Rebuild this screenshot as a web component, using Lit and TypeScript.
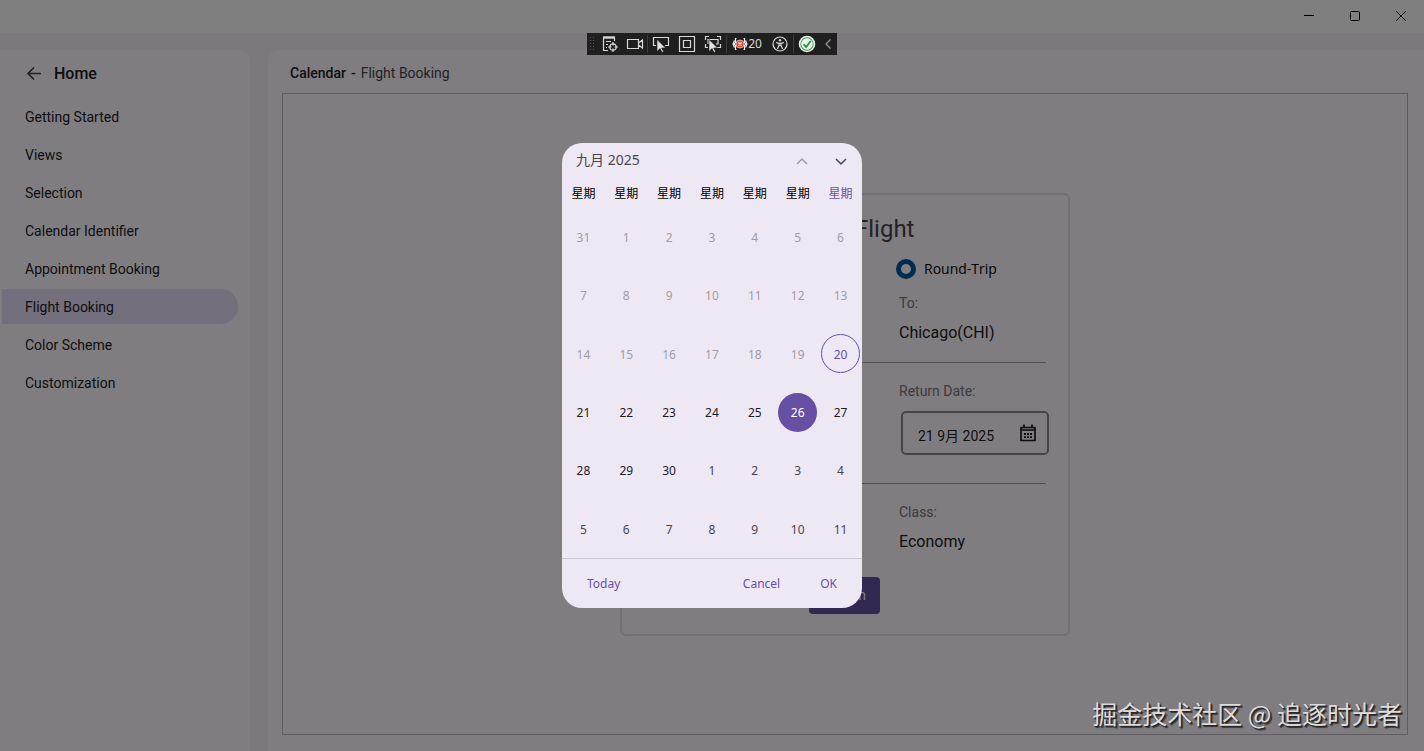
import { LitElement, html, css, svg } from "lit";
import { customElement, property, state } from "lit/decorators.js";
import { classMap } from "lit/directives/class-map.js";

const NAV_ITEMS = [
  "Getting Started",
  "Views",
  "Selection",
  "Calendar Identifier",
  "Appointment Booking",
  "Flight Booking",
  "Color Scheme",
  "Customization",
];

interface Day {
  label: number;
  kind: "past" | "current" | "next" | "today";
}

/* Six weeks of seven days, starting on 31 August 2025. */
function buildWeeks(): Day[][] {
  const days: Day[] = [];
  for (let i = 0; i < 42; i++) {
    if (i === 0) days.push({ label: 31, kind: "past" });
    else if (i < 20) days.push({ label: i, kind: "past" });
    else if (i === 20) days.push({ label: i, kind: "today" });
    else if (i <= 30) days.push({ label: i, kind: "current" });
    else days.push({ label: i - 30, kind: "next" });
  }
  return Array.from({ length: 6 }, (_, w) => days.slice(w * 7, w * 7 + 7));
}

@customElement("window-bar")
export class WindowBar extends LitElement {
  static styles = css`
    :host {
      display: flex;
      justify-content: flex-end;
      height: 33px;
      background: #ffffff;
    }
    .control {
      width: 46px;
      height: 32px;
      padding: 0;
      border: 0;
      background: none;
      display: grid;
      place-items: center;
      color: #000;
    }
    svg {
      display: block;
      fill: none;
      stroke: currentColor;
    }
  `;

  render() {
    return html`
      <button class="control" aria-label="Minimize">
        <svg width="12" height="12" viewBox="0 0 12 12"><path d="M1 5.5h10" /></svg>
      </button>
      <button class="control" aria-label="Maximize">
        <svg width="12" height="12" viewBox="0 0 12 12"><rect x="1.5" y="1.5" width="9" height="9" rx="1" /></svg>
      </button>
      <button class="control" aria-label="Close">
        <svg width="12" height="12" viewBox="0 0 12 12"><path d="M1 1l10 10M11 1L1 11" /></svg>
      </button>
    `;
  }
}

@customElement("side-nav")
export class SideNav extends LitElement {
  @property() active = "Flight Booking";

  static styles = css`
    :host {
      display: block;
      background: #fffbff;
      border-radius: 0 12px 0 0;
      font: 14px/20px Roboto, sans-serif;
      color: #1c1b1f;
    }
    .head {
      display: flex;
      align-items: center;
      gap: 12px;
      box-sizing: border-box;
      height: 48px;
      padding: 0 26px;
    }
    .back {
      padding: 0;
      border: 0;
      background: none;
      color: #49454f;
      display: block;
    }
    .back svg {
      display: block;
      fill: none;
      stroke: currentColor;
      stroke-width: 1.7;
    }
    .title {
      margin: 0;
      font-size: 16px;
      font-weight: 500;
    }
    .list {
      list-style: none;
      margin: 1px 12px 0 2px;
      padding: 0;
      display: grid;
      gap: 3px;
    }
    .link {
      display: flex;
      align-items: center;
      height: 35px;
      padding-left: 23px;
      border-radius: 0 18px 18px 0;
      color: inherit;
      text-decoration: none;
    }
    .link.active {
      background: #e8def8;
    }
  `;

  render() {
    return html`
      <div class="head">
        <button class="back" aria-label="Back">
          <svg width="16" height="16" viewBox="0 0 16 16"><path d="M15 7.500H2M8 1.500l-6 6 6 6" /></svg>
        </button>
        <h1 class="title">Home</h1>
      </div>
      <ul class="list">
        ${NAV_ITEMS.map(
          (item) => html`<li>
            <a href="#" class=${classMap({ link: true, active: item === this.active })}>${item}</a>
          </li>`
        )}
      </ul>
    `;
  }
}

@customElement("booking-card")
export class BookingCard extends LitElement {
  static styles = css`
    :host {
      display: block;
      box-sizing: border-box;
      width: 450px;
      padding: 18px 19px 20px 22px;
      border: 2px solid #e4e0e6;
      border-radius: 6px;
      font: 14px/20px Roboto, "Noto Sans CJK SC", sans-serif;
      color: #1c1b1f;
    }
    .title {
      margin: 0 3px 14px 0;
      font-size: 24px;
      line-height: 32px;
      font-weight: 400;
      text-align: center;
      color: #49454f;
    }
    .column {
      width: 153px;
      margin-left: auto;
    }
    .choice {
      display: flex;
      align-items: center;
      gap: 8px;
      font-family: "Open Sans", sans-serif;
      line-height: 22px;
      height: 20px;
      color: #000;
    }
    .choice input {
      appearance: none;
      width: 20px;
      height: 20px;
      margin: 0;
      border: 5px solid #005a9e;
      border-radius: 50%;
      background: #fff;
    }
    .field {
      display: grid;
      grid-template-columns: minmax(0, 1fr);
      padding-left: 3px;
    }
    .trip {
      margin: 14px 0 18px;
    }
    .label {
      color: #79767d;
    }
    .value {
      margin-top: 9px;
      font-size: 16px;
      line-height: 22px;
    }
    .rule {
      height: 1px;
      margin: 0 3px 0 0;
      border: 0;
      background: #a7a3aa;
    }
    .date {
      margin: 18px 0 28px;
    }
    .picker {
      display: flex;
      align-items: center;
      box-sizing: border-box;
      height: 44px;
      margin: 10px 0 0 2px;
      padding: 0 11px 0 15px;
      border: 2px solid #8c8990;
      border-radius: 5px;
    }
    .picker input {
      flex: 1;
      min-width: 0;
      padding: 6px 0 0;
      border: 0;
      background: none;
      font: inherit;
      color: inherit;
    }
    .open {
      padding: 0;
      border: 0;
      background: none;
      color: #1c1b1f;
    }
    .open svg {
      display: block;
    }
    .class {
      margin: 18px 0 24px;
    }
    .actions {
      display: flex;
      justify-content: center;
      padding-right: 4px;
    }
    .search {
      height: 37px;
      padding: 0 14px;
      border: 0;
      border-radius: 4px;
      background: #6750a4;
      color: #fff;
      font: inherit;
    }
  `;

  render() {
    return html`
      <h2 class="title">Book a Flight</h2>
      <div class="column">
        <label class="choice"><input type="radio" name="trip" checked />Round-Trip</label>
        <div class="field trip">
          <span class="label">To:</span>
          <span class="value">Chicago(CHI)</span>
        </div>
      </div>
      <hr class="rule" />
      <div class="column">
        <div class="field date">
          <label class="label" for="return">Return Date:</label>
          <div class="picker">
            <input id="return" type="text" readonly .value=${"21 9月 2025"} />
            <button class="open" aria-label="Open calendar">
              <svg width="16" height="18" viewBox="0 0 16 18" fill="none" stroke="currentColor">
                <path d="M1 3.5h14v13H1z" stroke-width="1.7" stroke-linejoin="round" />
                <path d="M1 6h14" stroke-width="1.6" />
                <path d="M4 .5v3M12 .5v3" stroke-width="1.8" />
                <path d="M4 10h8M4 13.2h8" stroke-width="1.8" stroke-dasharray="2 1" />
              </svg>
            </button>
          </div>
        </div>
      </div>
      <hr class="rule" />
      <div class="column">
        <div class="field class">
          <span class="label">Class:</span>
          <span class="value">Economy</span>
        </div>
      </div>
      <div class="actions"><button class="search">Search</button></div>
    `;
  }
}

@customElement("calendar-dialog")
export class CalendarDialog extends LitElement {
  @state() private selected = 26;
  private weeks = buildWeeks();

  static styles = css`
    :host {
      display: block;
      width: 300px;
      border-radius: 20px;
      overflow: hidden;
      background: #eee8f4;
      font: 12px/18px "Noto Sans", "Noto Sans CJK SC", sans-serif;
      color: #1c1b1f;
    }
    button {
      padding: 0;
      border: 0;
      background: none;
      font: inherit;
      color: inherit;
    }
    .head {
      display: flex;
      align-items: center;
      height: 35px;
      padding: 0 14px;
    }
    .month {
      flex: 1;
      padding-bottom: 2px;
      text-align: left;
      font-size: 14px;
      line-height: 20px;
      color: #49454f;
    }
    .step {
      width: 14px;
      height: 14px;
      margin-left: 25px;
      color: #49454f;
    }
    .step.off {
      color: #a09ca6;
    }
    .step svg {
      display: block;
      fill: none;
      stroke: currentColor;
      stroke-width: 1.5;
    }
    .grid {
      width: 100%;
      table-layout: fixed;
      border-collapse: collapse;
      text-align: center;
    }
    .grid th {
      height: 28px;
      padding: 2px 0 0;
      font-weight: 400;
      color: #000;
    }
    .grid th.sunday {
      color: #6750a4;
    }
    .weeks {
      height: 350px;
    }
    .grid td {
      padding: 0;
    }
    .day {
      box-sizing: border-box;
      display: block;
      width: 39px;
      height: 39px;
      margin: 0 auto;
      padding-top: 2px;
      border-radius: 50%;
    }
    .past {
      color: #a09ca6;
    }
    .next {
      color: #49454f;
    }
    .today {
      border: 1px solid #6750a4;
      color: #6750a4;
    }
    .selected {
      background: #6750a4;
      color: #fff;
    }
    .foot {
      display: flex;
      align-items: center;
      height: 49px;
      padding: 0 25px;
      border-top: 1px solid #c9c4d0;
      color: #6750a4;
    }
    .cancel {
      margin: 0 40px 0 auto;
    }
  `;

  render() {
    return html`
      <div class="head">
        <button class="month">九月 2025</button>
        <button class="step off" aria-label="Previous month">
          <svg width="14" height="14" viewBox="0 0 14 14"><path d="M2 10l5-5 5 5" /></svg>
        </button>
        <button class="step" aria-label="Next month">
          <svg width="14" height="14" viewBox="0 0 14 14"><path d="M2 5l5 5 5-5" /></svg>
        </button>
      </div>
      <table class="grid">
        <thead>
          <tr>
            ${Array.from({ length: 7 }, (_, i) => html`<th scope="col" class=${classMap({ sunday: i === 6 })}>星期</th>`)}
          </tr>
        </thead>
        <tbody class="weeks">
          ${this.weeks.map((week) => html`<tr>${week.map((day) => this.renderDay(day))}</tr>`)}
        </tbody>
      </table>
      <div class="foot">
        <button>Today</button>
        <button class="cancel">Cancel</button>
        <button>OK</button>
      </div>
    `;
  }

  private renderDay(day: Day) {
    const selected = day.kind === "current" && day.label === this.selected;
    return html`<td>
      <button
        class=${classMap({ day: true, [day.kind]: true, selected })}
        ?disabled=${day.kind === "past"}
        @click=${() => {
          if (day.kind === "current") this.selected = day.label;
        }}
      >${day.label}</button>
    </td>`;
  }
}

const POINTER = svg`<path d="M5 4.500v12l3-3 2 4 1.600-1-2-3.500h4z" fill="#e4e4e4" stroke="#1f1f1f" stroke-width=".6" />`;

@customElement("debug-toolbar")
export class DebugToolbar extends LitElement {
  static styles = css`
    :host {
      display: flex;
      align-items: center;
      box-sizing: border-box;
      width: 250px;
      height: 22px;
      background: #1f1f1f;
      color: #d8d8d8;
      font: 12px/16px "Noto Sans", sans-serif;
    }
    .grip {
      width: 5px;
      height: 16px;
      margin: 0 3px 0 2px;
      background: radial-gradient(circle, #555 35%, transparent 45%) 0 0 / 3px 3px;
    }
    .tool {
      display: flex;
      align-items: center;
      justify-content: center;
      width: 26px;
      height: 22px;
      padding: 0;
      border: 0;
      background: none;
      color: inherit;
      font: inherit;
    }
    .tool.narrow {
      width: 24px;
    }
    .tool.wide {
      width: 40px;
    }
    .tool svg {
      display: block;
      flex: none;
      fill: none;
      stroke: currentColor;
      stroke-width: 1.2;
    }
    .split {
      width: 1px;
      height: 18px;
      background: #3d3d3d;
    }
    .dim {
      color: #999;
      width: 16px;
    }
  `;

  render() {
    return html`
      <span class="grip"></span>
      <button class="tool" aria-label="Live visual tree">
        <svg width="18" height="18" viewBox="0 0 18 18">
          <path d="M7 15.500H2.500V3M5 6.500h5M5 9.500h2M5 12.500h1M13.500 3v3" />
          <path d="M2 2.500h12" stroke-width="2.400" />
          <circle cx="12" cy="12" r="3.200" />
          <path d="M12 7v3.500M12 13.500V17M7 12h3.500M13.500 12H17" />
        </svg>
      </button>
      <button class="tool narrow" aria-label="Camera">
        <svg width="18" height="18" viewBox="0 0 18 18">
          <path d="M1.500 4.500h11v9h-11zM12.500 8l4-3v8l-4-3z" />
        </svg>
      </button>
      <span class="split"></span>
      <button class="tool" aria-label="Select element">
        <svg width="18" height="18" viewBox="0 0 18 18">
          <path d="M4 10.500H1.500v-8h15v8H13" />
          ${POINTER}
        </svg>
      </button>
      <button class="tool" aria-label="Layout adorners">
        <svg width="18" height="18" viewBox="0 0 18 18">
          <path d="M1.500 1.500h15v15h-15zM5.500 5.500h7v7h-7z" />
        </svg>
      </button>
      <button class="tool" aria-label="Track focus">
        <svg width="18" height="18" viewBox="0 0 18 18">
          <path d="M1.500 5V1.500H5M13 1.500h3.500V5M16.500 9v3.500H13M1.500 9v3.500H4M4 9V4.500h10V9h-2" />
          ${POINTER}
        </svg>
      </button>
      <span class="split"></span>
      <button class="tool wide" aria-label="Binding failures, 20">
        <svg width="16" height="16" viewBox="0 0 16 16">
          <path d="M4.500 2.500h-1v4L2 8l1.500 1.500v4h1M11.500 2.500h1v4L14 8l-1.500 1.500v4h-1" stroke="#f0f0f0" />
          <path d="M2.500 4.500L1 8l1.500 3.500M13.500 4.500L15 8l-1.500 3.500" stroke="#f0f0f0" />
          <circle cx="8" cy="8" r="4" fill="#e0412f" stroke="#f6d0c8" stroke-width=".8" />
          <path d="M6.500 6.500l3 3M9.500 6.500l-3 3" stroke="#fff" stroke-width="1.300" />
        </svg>
        <span>20</span>
      </button>
      <button class="tool" aria-label="Accessibility">
        <svg width="16" height="16" viewBox="0 0 16 16">
          <circle cx="8" cy="8" r="7" />
          <circle cx="8" cy="4.200" r="1.200" fill="currentColor" stroke="none" />
          <path d="M4 6.500l3 .8v2L5.500 13M12 6.500l-3 .8v2l1.500 3.700M7 7.300h2M7 9.500h2" />
        </svg>
      </button>
      <span class="split"></span>
      <button class="tool" aria-label="Hot reload ready">
        <svg width="18" height="18" viewBox="0 0 18 18">
          <circle cx="9" cy="9" r="7.500" fill="#3c9a4c" stroke="#e6f2e8" stroke-width="1.600" />
          <circle cx="9" cy="9" r="5.800" fill="#eef7ef" stroke="none" />
          <path d="M5.500 9.200l2.600 2.800 4.600-6" stroke="#2f8f41" stroke-width="1.800" />
        </svg>
      </button>
      <button class="tool dim" aria-label="Collapse">
        <svg width="8" height="12" viewBox="0 0 8 12"><path d="M6.500 1.500L2 6l4.500 4.500" /></svg>
      </button>
    `;
  }
}

@customElement("app-root")
export class AppRoot extends LitElement {
  static styles = css`
    :host {
      display: grid;
      grid-template-rows: auto 1fr;
      min-height: 100vh;
      position: relative;
      background: #f8f3fa;
      font: 14px/20px Roboto, sans-serif;
      color: #1c1b1f;
    }
    .body {
      display: grid;
      grid-template-columns: 250px 1fr;
      gap: 18px;
      padding-top: 17px;
    }
    .panel {
      display: flex;
      flex-direction: column;
      padding: 0 16px 16px 14px;
      background: #fffbff;
      border-radius: 12px 0 0 0;
    }
    .crumbs {
      display: flex;
      gap: 5px;
      align-items: center;
      height: 43px;
      margin: 0;
      padding: 3px 8px 0;
      box-sizing: border-box;
      font-weight: 400;
      color: #49454f;
    }
    .crumbs strong {
      font-weight: 500;
      color: #1c1b1f;
    }
    .stage {
      flex: 1;
      display: flex;
      align-items: center;
      justify-content: center;
      border: 1px solid #bdb9c0;
    }
    .scrim {
      position: absolute;
      inset: 0;
      display: grid;
      place-items: center;
      background: rgba(0, 0, 0, 0.5);
    }
    .tools {
      position: absolute;
      top: 33px;
      left: 50%;
      transform: translateX(-50%);
    }
    .credit {
      position: absolute;
      right: 22px;
      bottom: 20px;
      font: 25px/36px "Noto Sans CJK SC", sans-serif;
      color: #dedcde;
      text-shadow: 1px 1px 1px #222, 2px 2px 1px #333;
    }
  `;

  render() {
    return html`
      <window-bar></window-bar>
      <div class="body">
        <side-nav></side-nav>
        <main class="panel">
          <p class="crumbs"><strong>Calendar</strong><strong>-</strong><span>Flight Booking</span></p>
          <section class="stage"><booking-card></booking-card></section>
        </main>
      </div>
      <div class="scrim"><calendar-dialog role="dialog" aria-label="Choose a date"></calendar-dialog></div>
      <debug-toolbar class="tools"></debug-toolbar>
      <span class="credit">掘金技术社区 @ 追逐时光者</span>
    `;
  }
}
